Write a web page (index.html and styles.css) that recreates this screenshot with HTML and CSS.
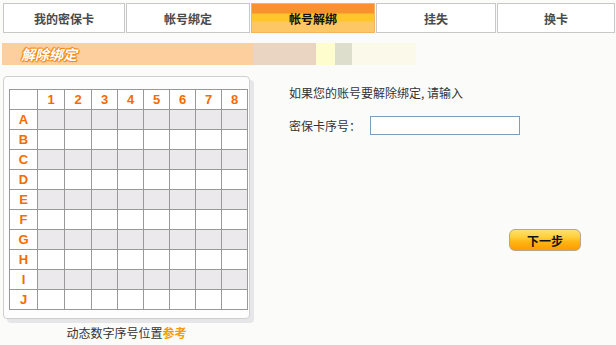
FILE: index.html
```html
<!DOCTYPE html>
<html>
<head>
	<title>密保卡 - 帐号解绑</title>
	<meta charset="utf-8">
	<link rel="stylesheet" href="styles.css">
</head>
<body>
	<nav class="tabs">
		<a class="tab t1">我的密保卡</a>
		<a class="tab t2">帐号绑定</a>
		<a class="tab t3 active">帐号解绑</a>
		<a class="tab t4">挂失</a>
		<a class="tab t5">换卡</a>
	</nav>

	<div class="banner">
		<div class="seg seg-title"><span>解除绑定</span></div>
		<div class="seg seg-beige"></div>
		<div class="seg seg-yellow"></div>
		<div class="seg seg-gray"></div>
		<div class="seg seg-pale"></div>
	</div>

	<section class="main">
		<div class="cardcol">
			<div class="cardbox">
				<div class="grid" id="grid"></div>
			</div>
			<p class="caption">动态数字序号位置<b>参考</b></p>
		</div>

		<div class="formcol">
			<p class="intro">如果您的账号要解除绑定, 请输入</p>
			<div class="field">
				<label for="serial">密保卡序号：</label>
				<input type="text" id="serial">
			</div>
			<button class="next">下一步</button>
		</div>
	</section>

	<script>
		// build the 8x10 card grid
		var grid = document.getElementById('grid');
		var rows = ['', 'A', 'B', 'C', 'D', 'E', 'F', 'G', 'H', 'I', 'J'];
		rows.forEach(function (r, ri) {
			for (var c = 0; c <= 8; c++) {
				var cell = document.createElement('div');
				cell.className = 'cell';
				if (ri === 0 && c > 0) { cell.className += ' lbl'; cell.textContent = c; }
				else if (c === 0 && ri > 0) { cell.className += ' lbl'; cell.textContent = r; }
				else if (ri > 0 && ri % 2 === 1) { cell.className += ' shade'; }
				grid.appendChild(cell);
			}
		});
	</script>
</body>
</html>
```

FILE: styles.css
```css
html, body {
	margin: 0;
	padding: 0;
}

body {
	background-color: #fbfcfa;
	font-family: "Noto Sans CJK SC", "DejaVu Sans", sans-serif;
	font-size: 12px;
	color: #333;
	width: 616px;
	height: 345px;
	overflow: hidden;
}

p {
	margin: 0;
}

.tabs {
	display: flex;
	gap: 1px;
	padding: 3px 0 0 3px;
}

.tab {
	box-sizing: border-box;
	height: 30px;
	border: 1px solid #c8c8c8;
	background-color: #fff;
	display: flex;
	align-items: center;
	justify-content: center;
	font-weight: bold;
	color: #4a4a4a;
	cursor: pointer;
}
.t1 { width: 122px; }
.t2 { width: 124px; }
.t3 { width: 124px; }
.t4 { width: 120px; }
.t5 { width: 118px; }

.tab.active {
	border-color: #f6b35c;
	color: #111;
	background: linear-gradient(#f9922e 0, #f9922e 9px, #ffc62c 10px, #ffc62c 17px, #fec766 18px, #fec766 100%);
}

.banner {
	display: flex;
	height: 22px;
	margin: 10px 0 0 2px;
}
.seg { height: 100%; }
.seg-title {
	width: 251px;
	background-color: #fdcf9e;
	display: flex;
	align-items: center;
}
.seg-title span {
	margin-left: 19px;
	color: #fff;
	font-size: 14px;
	font-weight: bold;
	font-style: italic;
	text-shadow: 1px 0 0 #f7880f, -1px 0 0 #f7880f, 0 1px 0 #f7880f, 0 -1px 0 #f7880f, 1px 1px 1px #f7880f, -1px -1px 1px #f7880f;
}
.seg-beige { width: 63px; background-color: #ead5c3; }
.seg-yellow { width: 19px; background-color: #fdfdcd; }
.seg-gray { width: 17px; background-color: #dddecb; }
.seg-pale { width: 64px; background-color: #fbfaea; }

.main {
	display: flex;
	margin-top: 11px;
}

.cardcol {
	margin-left: 3px;
	width: 247px;
}

.cardbox {
	box-sizing: border-box;
	width: 247px;
	height: 243px;
	border: 1px solid #cfcfcf;
	border-radius: 4px;
	background-color: #fdfdfd;
	box-shadow: 4px 4px 0 #e6e5e7;
	padding: 12px 0 0 5px;
}

.grid {
	display: grid;
	grid-template-columns: 27px 26px 26px repeat(6, 25px);
	grid-auto-rows: 19px;
	gap: 1px;
	padding: 1px;
	background-color: #999;
	width: max-content;
}

.cell {
	background-color: #fff;
	display: flex;
	align-items: center;
	justify-content: center;
}
.cell.shade { background-color: #ebe9ec; }
.cell.lbl {
	font-family: "Liberation Sans", Arial, sans-serif;
	font-size: 13px;
	font-weight: bold;
	color: #f66a00;
}

.caption {
	text-align: center;
	margin-top: 6px;
	line-height: 16px;
	color: #333;
}
.caption b { color: #f99a00; }

.formcol {
	margin-left: 39px;
	padding-top: 9px;
	display: flex;
	flex-direction: column;
	align-items: flex-start;
}

.intro {
	line-height: 16px;
}

.field {
	display: flex;
	align-items: center;
	margin-top: 15px;
}
.field label {
	width: 81px;
}
.field input {
	box-sizing: border-box;
	width: 150px;
	height: 19px;
	border: 1px solid #7f9db9;
	background-color: #fff;
	margin: 0;
	padding: 0 2px;
}

.next {
	margin: 94px 0 0 220px;
	box-sizing: border-box;
	width: 72px;
	height: 22px;
	border: 1px solid #b9a58e;
	border-radius: 6px;
	background: linear-gradient(#ffe071 0, #ffd03a 35%, #ffb414 60%, #ff9b00 100%);
	font-family: "Noto Sans CJK SC", sans-serif;
	font-size: 12px;
	font-weight: bold;
	color: #111;
	padding: 0;
	cursor: pointer;
}
```
